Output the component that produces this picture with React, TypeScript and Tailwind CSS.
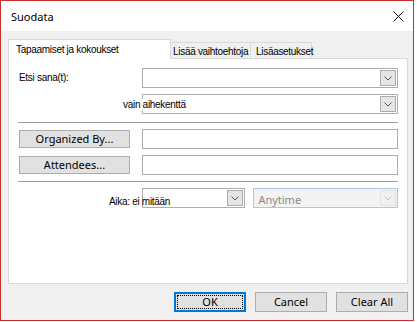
import clsx from "clsx";

const lbl = "font-['Liberation_Sans',Arial,sans-serif] text-[10px] leading-[12px] tracking-[-0.3px] text-black whitespace-nowrap";
const uiFont = "font-['Noto_Sans',sans-serif] text-[11px] leading-[14px] whitespace-nowrap";
const ui = clsx(uiFont, "text-black");

function Chevron({ light }: { light?: boolean }) {
  return (
    <svg width="8" height="5" viewBox="0 0 8 5" className="block">
      <polyline points="0.5,0.5 4,4 7.5,0.5" fill="none" stroke={light ? "#c4c4c4" : "#555"} strokeWidth="1" />
    </svg>
  );
}

function Combo({ className, disabled, children }: { className?: string; disabled?: boolean; children?: React.ReactNode }) {
  return (
    <div
      className={clsx(
        "flex h-[20px] items-center border p-px",
        disabled ? "border-[#a9c9ea] bg-[#f3f3f3]" : "border-[#adadad] bg-white",
        className
      )}
    >
      <div className="min-w-0 flex-1 pl-[3px]">{children}</div>
      <div
        className={clsx(
          "flex h-[16px] w-[16px] items-center justify-center border",
          disabled ? "border-[#e3e3e3] bg-[#f0f0f0]" : "border-[#adadad] bg-[#e5e5e5]"
        )}
      >
        <Chevron light={disabled} />
      </div>
    </div>
  );
}

function Btn({ children, focused, className }: { children: React.ReactNode; focused?: boolean; className?: string }) {
  return (
    <button
      className={clsx(
        "flex items-center justify-center bg-[#e1e1e1]",
        focused ? "border-2 border-[#0078d7] p-px" : "border border-[#adadad]",
        ui,
        className
      )}
    >
      {focused ? (
        <span className="flex h-full w-full items-center justify-center border border-dotted border-black">{children}</span>
      ) : (
        children
      )}
    </button>
  );
}

export default function App() {
  return (
    <div className="flex h-[321px] w-[414px] flex-col border border-[#c4302b] bg-white">
      {/* title bar */}
      <div className="flex h-[30px] items-center justify-between bg-white pl-[10px] pr-[9px]">
        <span className={clsx(ui, "pt-[1px]")}>Suodata</span>
        <svg width="11" height="11" viewBox="0 0 11 11" className="block">
          <line x1="0.5" y1="0.5" x2="10.5" y2="10.5" stroke="#111" strokeWidth="1" />
          <line x1="10.5" y1="0.5" x2="0.5" y2="10.5" stroke="#111" strokeWidth="1" />
        </svg>
      </div>

      <div className="flex flex-1 flex-col bg-[#f0f0f0] pl-[7px] pr-[5px] pt-[8px]">
        {/* tabs */}
        <div className="relative z-10 flex h-[19px] items-end">
          <div className="-mb-px flex h-[20px] w-[163px] items-center border border-b-0 border-[#d9d9d9] bg-white pl-[7px]">
            <span className={lbl}>Tapaamiset ja kokoukset</span>
          </div>
          <div className="flex h-[16px] w-[80px] items-center border border-l-0 border-b-0 border-[#d9d9d9] bg-[#f0f0f0] pl-[2px] pt-[2px]">
            <span className={lbl}>Lisää vaihtoehtoja</span>
          </div>
          <div className="flex h-[16px] w-[61px] items-center border border-l-0 border-b-0 border-[#d9d9d9] bg-[#f0f0f0] pl-[5px] pt-[2px]">
            <span className={lbl}>Lisäasetukset</span>
          </div>
        </div>

        {/* panel */}
        <div className="flex h-[226px] flex-col border border-[#d9d9d9] bg-white pl-[10px] pr-[9px]">
          <div className="mt-[9px] flex items-center">
            <span className={clsx(lbl, "w-[123px]")}>Etsi sana(t):</span>
            <Combo className="flex-1" />
          </div>

          <div className="relative mt-[6px] flex items-center">
            <div className="w-[123px]" />
            <Combo className="flex-1" />
            <span className={clsx(lbl, "absolute left-[104px] top-[5px] bg-white pr-[2px]")}>vain aihekenttä</span>
          </div>

          <div className="-ml-px mt-[8px] h-px bg-[#a0a0a0]" />

          <div className="mt-[6px] flex items-center">
            <div className="w-[123px]">
              <Btn className="h-[18px] w-[111px]">Organized By...</Btn>
            </div>
            <div className="h-[20px] flex-1 border border-[#adadad] bg-white" />
          </div>

          <div className="mt-[6px] flex items-center">
            <div className="w-[123px]">
              <Btn className="h-[18px] w-[111px]">Attendees...</Btn>
            </div>
            <div className="h-[20px] flex-1 border border-[#adadad] bg-white" />
          </div>

          <div className="-ml-px mt-[6px] h-px bg-[#a0a0a0]" />

          <div className="relative mt-[6px] flex items-center">
            <div className="w-[123px]" />
            <Combo className="w-[104px]" />
            <Combo disabled className="ml-[8px] w-[145px]">
              <span className={clsx(uiFont, "text-[#8a8a8a]")}>Anytime</span>
            </Combo>
            <span className={clsx(lbl, "absolute left-[90px] top-[8px]")}>Aika: ei mitään</span>
          </div>
        </div>

        {/* footer */}
        <div className="mt-[8px] flex justify-end gap-[9px]">
          <Btn focused className="h-[20px] w-[72px]">OK</Btn>
          <Btn className="h-[20px] w-[72px]">Cancel</Btn>
          <Btn className="h-[20px] w-[72px]">Clear All</Btn>
        </div>
      </div>
    </div>
  );
}
